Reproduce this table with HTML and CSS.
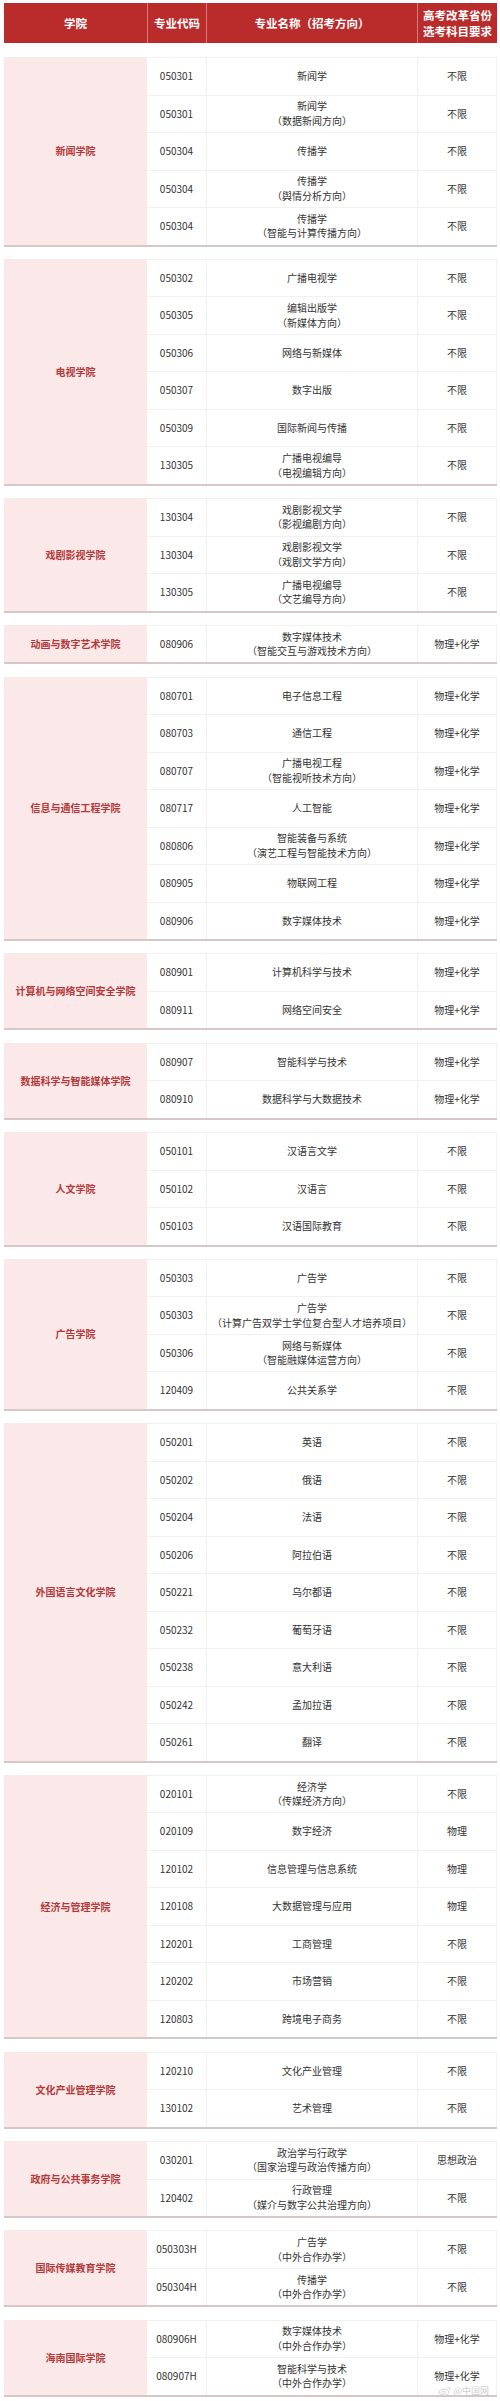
FILE: index.html
```html
<!DOCTYPE html>
<html lang="zh">
<head>
<meta charset="utf-8">
<link rel="stylesheet" href="styles.css">
</head>
<body>
<div class="table">
  <div class="thead">
    <div class="th">学院</div>
    <div class="th">专业代码</div>
    <div class="th">专业名称（招考方向）</div>
    <div class="th">高考改革省份<br>选考科目要求</div>
  </div>

  <div class="group">
    <div class="college">新闻学院</div>
    <div class="rows">
      <div class="row"><div class="code">050301</div><div class="name">新闻学</div><div class="req">不限</div></div>
      <div class="row"><div class="code">050301</div><div class="name">新闻学<br>（数据新闻方向）</div><div class="req">不限</div></div>
      <div class="row"><div class="code">050304</div><div class="name">传播学</div><div class="req">不限</div></div>
      <div class="row"><div class="code">050304</div><div class="name">传播学<br>（舆情分析方向）</div><div class="req">不限</div></div>
      <div class="row"><div class="code">050304</div><div class="name">传播学<br>（智能与计算传播方向）</div><div class="req">不限</div></div>
    </div>
  </div>

  <div class="group">
    <div class="college">电视学院</div>
    <div class="rows">
      <div class="row"><div class="code">050302</div><div class="name">广播电视学</div><div class="req">不限</div></div>
      <div class="row"><div class="code">050305</div><div class="name">编辑出版学<br>（新媒体方向）</div><div class="req">不限</div></div>
      <div class="row"><div class="code">050306</div><div class="name">网络与新媒体</div><div class="req">不限</div></div>
      <div class="row"><div class="code">050307</div><div class="name">数字出版</div><div class="req">不限</div></div>
      <div class="row"><div class="code">050309</div><div class="name">国际新闻与传播</div><div class="req">不限</div></div>
      <div class="row"><div class="code">130305</div><div class="name">广播电视编导<br>（电视编辑方向）</div><div class="req">不限</div></div>
    </div>
  </div>

  <div class="group">
    <div class="college">戏剧影视学院</div>
    <div class="rows">
      <div class="row"><div class="code">130304</div><div class="name">戏剧影视文学<br>（影视编剧方向）</div><div class="req">不限</div></div>
      <div class="row"><div class="code">130304</div><div class="name">戏剧影视文学<br>（戏剧文学方向）</div><div class="req">不限</div></div>
      <div class="row"><div class="code">130305</div><div class="name">广播电视编导<br>（文艺编导方向）</div><div class="req">不限</div></div>
    </div>
  </div>

  <div class="group">
    <div class="college">动画与数字艺术学院</div>
    <div class="rows">
      <div class="row"><div class="code">080906</div><div class="name">数字媒体技术<br>（智能交互与游戏技术方向）</div><div class="req">物理+化学</div></div>
    </div>
  </div>

  <div class="group">
    <div class="college">信息与通信工程学院</div>
    <div class="rows">
      <div class="row"><div class="code">080701</div><div class="name">电子信息工程</div><div class="req">物理+化学</div></div>
      <div class="row"><div class="code">080703</div><div class="name">通信工程</div><div class="req">物理+化学</div></div>
      <div class="row"><div class="code">080707</div><div class="name">广播电视工程<br>（智能视听技术方向）</div><div class="req">物理+化学</div></div>
      <div class="row"><div class="code">080717</div><div class="name">人工智能</div><div class="req">物理+化学</div></div>
      <div class="row"><div class="code">080806</div><div class="name">智能装备与系统<br>（演艺工程与智能技术方向）</div><div class="req">物理+化学</div></div>
      <div class="row"><div class="code">080905</div><div class="name">物联网工程</div><div class="req">物理+化学</div></div>
      <div class="row"><div class="code">080906</div><div class="name">数字媒体技术</div><div class="req">物理+化学</div></div>
    </div>
  </div>

  <div class="group">
    <div class="college">计算机与网络空间安全学院</div>
    <div class="rows">
      <div class="row"><div class="code">080901</div><div class="name">计算机科学与技术</div><div class="req">物理+化学</div></div>
      <div class="row"><div class="code">080911</div><div class="name">网络空间安全</div><div class="req">物理+化学</div></div>
    </div>
  </div>

  <div class="group">
    <div class="college">数据科学与智能媒体学院</div>
    <div class="rows">
      <div class="row"><div class="code">080907</div><div class="name">智能科学与技术</div><div class="req">物理+化学</div></div>
      <div class="row"><div class="code">080910</div><div class="name">数据科学与大数据技术</div><div class="req">物理+化学</div></div>
    </div>
  </div>

  <div class="group">
    <div class="college">人文学院</div>
    <div class="rows">
      <div class="row"><div class="code">050101</div><div class="name">汉语言文学</div><div class="req">不限</div></div>
      <div class="row"><div class="code">050102</div><div class="name">汉语言</div><div class="req">不限</div></div>
      <div class="row"><div class="code">050103</div><div class="name">汉语国际教育</div><div class="req">不限</div></div>
    </div>
  </div>

  <div class="group">
    <div class="college">广告学院</div>
    <div class="rows">
      <div class="row"><div class="code">050303</div><div class="name">广告学</div><div class="req">不限</div></div>
      <div class="row"><div class="code">050303</div><div class="name">广告学<br>（计算广告双学士学位复合型人才培养项目）</div><div class="req">不限</div></div>
      <div class="row"><div class="code">050306</div><div class="name">网络与新媒体<br>（智能融媒体运营方向）</div><div class="req">不限</div></div>
      <div class="row"><div class="code">120409</div><div class="name">公共关系学</div><div class="req">不限</div></div>
    </div>
  </div>

  <div class="group">
    <div class="college">外国语言文化学院</div>
    <div class="rows">
      <div class="row"><div class="code">050201</div><div class="name">英语</div><div class="req">不限</div></div>
      <div class="row"><div class="code">050202</div><div class="name">俄语</div><div class="req">不限</div></div>
      <div class="row"><div class="code">050204</div><div class="name">法语</div><div class="req">不限</div></div>
      <div class="row"><div class="code">050206</div><div class="name">阿拉伯语</div><div class="req">不限</div></div>
      <div class="row"><div class="code">050221</div><div class="name">乌尔都语</div><div class="req">不限</div></div>
      <div class="row"><div class="code">050232</div><div class="name">葡萄牙语</div><div class="req">不限</div></div>
      <div class="row"><div class="code">050238</div><div class="name">意大利语</div><div class="req">不限</div></div>
      <div class="row"><div class="code">050242</div><div class="name">孟加拉语</div><div class="req">不限</div></div>
      <div class="row"><div class="code">050261</div><div class="name">翻译</div><div class="req">不限</div></div>
    </div>
  </div>

  <div class="group">
    <div class="college">经济与管理学院</div>
    <div class="rows">
      <div class="row"><div class="code">020101</div><div class="name">经济学<br>（传媒经济方向）</div><div class="req">不限</div></div>
      <div class="row"><div class="code">020109</div><div class="name">数字经济</div><div class="req">物理</div></div>
      <div class="row"><div class="code">120102</div><div class="name">信息管理与信息系统</div><div class="req">物理</div></div>
      <div class="row"><div class="code">120108</div><div class="name">大数据管理与应用</div><div class="req">物理</div></div>
      <div class="row"><div class="code">120201</div><div class="name">工商管理</div><div class="req">不限</div></div>
      <div class="row"><div class="code">120202</div><div class="name">市场营销</div><div class="req">不限</div></div>
      <div class="row"><div class="code">120803</div><div class="name">跨境电子商务</div><div class="req">不限</div></div>
    </div>
  </div>

  <div class="group">
    <div class="college">文化产业管理学院</div>
    <div class="rows">
      <div class="row"><div class="code">120210</div><div class="name">文化产业管理</div><div class="req">不限</div></div>
      <div class="row"><div class="code">130102</div><div class="name">艺术管理</div><div class="req">不限</div></div>
    </div>
  </div>

  <div class="group">
    <div class="college">政府与公共事务学院</div>
    <div class="rows">
      <div class="row"><div class="code">030201</div><div class="name">政治学与行政学<br>（国家治理与政治传播方向）</div><div class="req">思想政治</div></div>
      <div class="row"><div class="code">120402</div><div class="name">行政管理<br>（媒介与数字公共治理方向）</div><div class="req">不限</div></div>
    </div>
  </div>

  <div class="group">
    <div class="college">国际传媒教育学院</div>
    <div class="rows">
      <div class="row"><div class="code">050303H</div><div class="name">广告学<br>（中外合作办学）</div><div class="req">不限</div></div>
      <div class="row"><div class="code">050304H</div><div class="name">传播学<br>（中外合作办学）</div><div class="req">不限</div></div>
    </div>
  </div>

  <div class="group">
    <div class="college">海南国际学院</div>
    <div class="rows">
      <div class="row"><div class="code">080906H</div><div class="name">数字媒体技术<br>（中外合作办学）</div><div class="req">物理+化学</div></div>
      <div class="row"><div class="code">080907H</div><div class="name">智能科学与技术<br>（中外合作办学）</div><div class="req">物理+化学</div></div>
    </div>
    <div class="watermark">
      <svg class="wb" viewBox="0 0 20 16" width="13" height="10"><ellipse cx="9" cy="10" rx="8" ry="5" fill="none" stroke="#cccccc" stroke-width="1.4"/><ellipse cx="8" cy="10.5" rx="3" ry="2.2" fill="none" stroke="#cccccc" stroke-width="1.2"/><path d="M14 2 a5 5 0 0 1 5 5" fill="none" stroke="#cccccc" stroke-width="1.3"/></svg>
      <span>@中国网</span>
    </div>
  </div>
</div>
</body>
</html>
```

FILE: styles.css
```css
* { box-sizing: border-box; }

body {
  margin: 0;
  background: #ffffff;
  font-family: "Noto Sans CJK SC", "Noto Sans", sans-serif;
  color: #333333;
}

.table {
  margin: 3px 3px 0 4px;
  width: 493px;
}

.thead {
  display: grid;
  grid-template-columns: 143px 59px 211px 80px;
  height: 40px;
  background: #ba2c2c;
  margin-bottom: 14px;
}

.th {
  display: flex;
  align-items: center;
  justify-content: center;
  text-align: center;
  color: #ffffff;
  font-weight: 700;
  font-size: 11.5px;
  line-height: 16px;
  border-left: 1px solid #d77a7a;
}

.th:first-child { border-left: none; }

.group {
  position: relative;
  display: grid;
  grid-template-columns: 143px 350px;
  border-bottom: 2px solid #d6c8c8;
  margin-bottom: 12.3px;
}

.college {
  display: flex;
  align-items: center;
  justify-content: center;
  background: #fbe8e8;
  color: #b3383a;
  font-weight: 700;
  font-size: 10px;
  text-align: center;
}

.rows {
  display: flex;
  flex-direction: column;
}

.row {
  display: grid;
  grid-template-columns: 59px 211px 80px;
  height: 37.5px;
  border-top: 1px solid #f1f1f1;
  background: #ffffff;
}

.row > div {
  display: flex;
  align-items: center;
  justify-content: center;
  text-align: center;
  font-size: 10px;
  line-height: 14.5px;
  color: #333333;
}

.row .name,
.row .req {
  border-left: 1px solid #f1f1f1;
}

.row .req { border-right: 1px solid #f3f3f3; }

.watermark {
  position: absolute;
  right: 8px;
  bottom: -1px;
  display: flex;
  align-items: center;
  gap: 2px;
  color: #d0d0d0;
  font-size: 9px;
  line-height: 10px;
}
```
